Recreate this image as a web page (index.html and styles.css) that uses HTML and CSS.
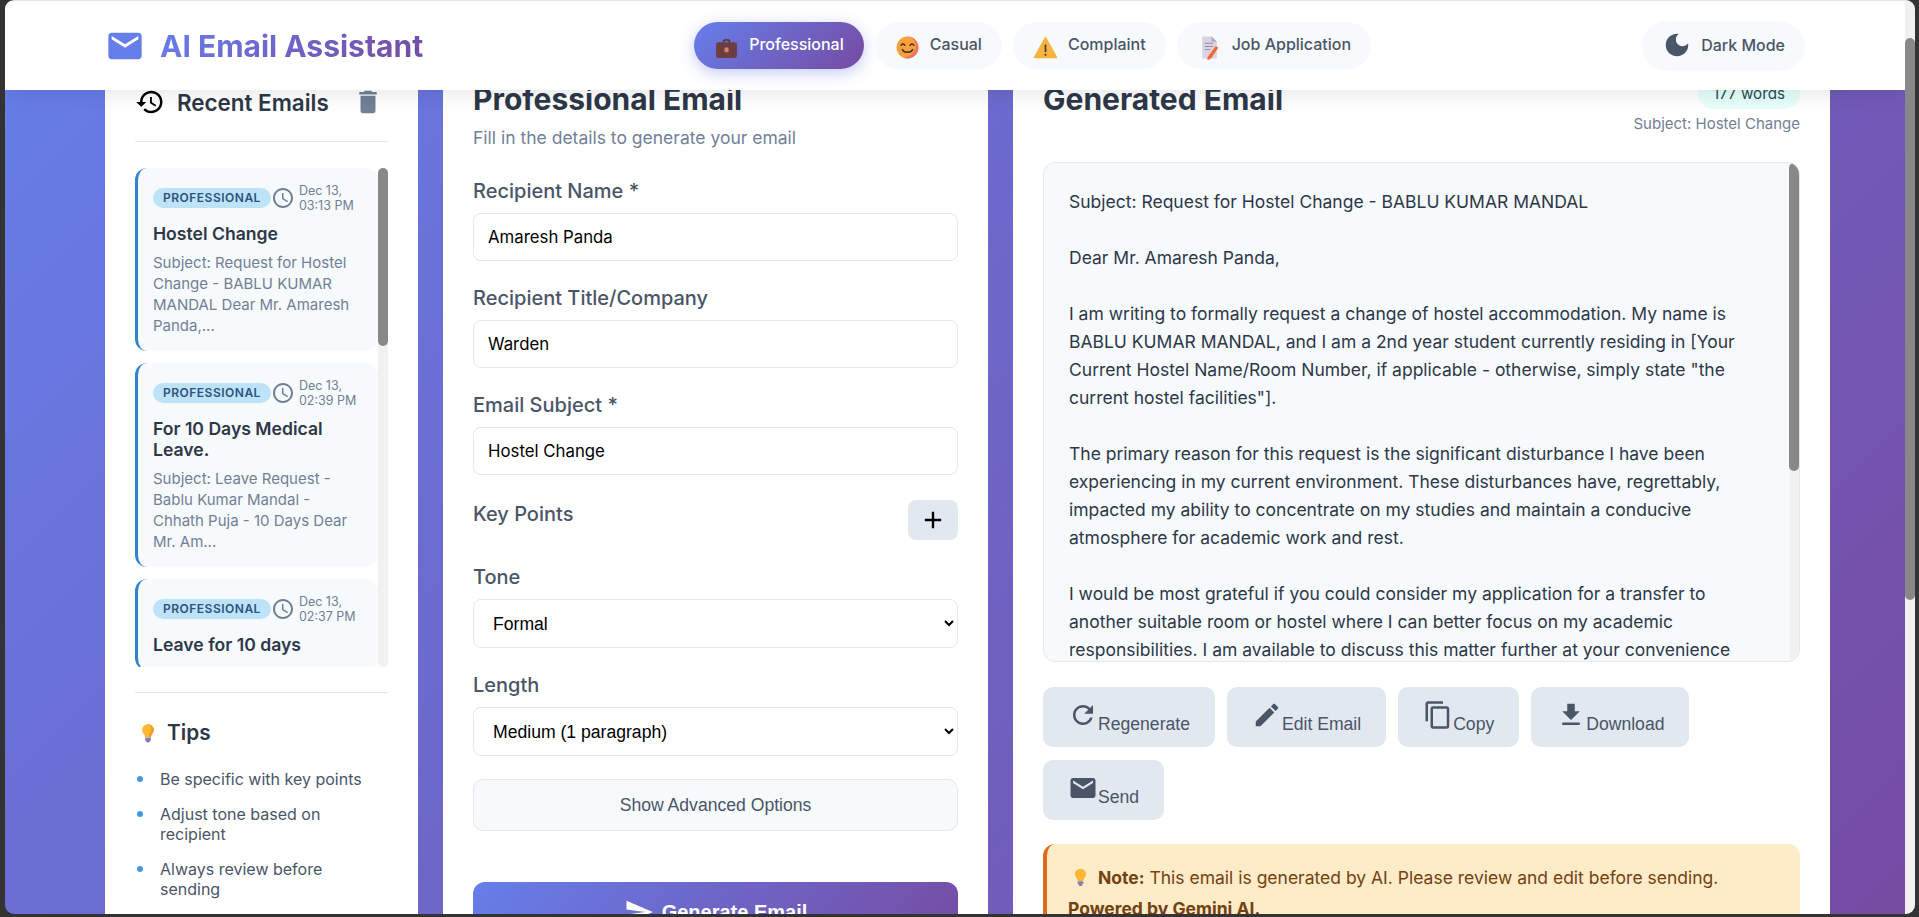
FILE: index.html
```html
<!DOCTYPE html>
<html lang="en">
<head>
	<meta charset="UTF-8">
	<title>AI Email Assistant</title>
	<link rel="stylesheet" href="styles.css">
</head>
<body>
<div class="window">
	<div class="page">
		<header class="topbar">
			<div class="brand">
				<svg class="brand-icon" viewBox="0 0 24 24"><path d="M20 4H4c-1.1 0-1.99.9-1.99 2L2 18c0 1.1.9 2 2 2h16c1.1 0 2-.9 2-2V6c0-1.1-.9-2-2-2zm0 4l-8 5-8-5V6l8 5 8-5v2z"/></svg>
				<span class="brand-name">AI Email Assistant</span>
			</div>
			<nav class="tabs">
				<a class="tab active">
					<svg class="emoji" viewBox="0 0 24 24"><path d="M8.5 7V5.5C8.5 4.7 9.2 4 10 4h4c.8 0 1.5.7 1.5 1.5V7H14V5.6h-4V7z" fill="#4d3030"/><rect x="2" y="7" width="20" height="15" rx="2" fill="#6d3d44"/><rect x="10" y="12" width="4" height="4.5" rx="1" fill="#d9825b"/></svg>
					Professional
				</a>
				<a class="tab">
					<svg class="emoji" viewBox="0 0 24 24"><circle cx="12" cy="12" r="10.5" fill="#f9a13c"/><path d="M12 1.500A10.500 10.500 0 0 1 22.500 12c0 5-4 10.500-10.500 10.500-1 0-3-.5-4-1 6 0 12-5 12-11 0-3-2-6-3-7.500z" fill="#ee7560"/><path d="M5.800 10c.8-1.800 3-1.800 3.800 0M14.400 10c.8-1.800 3-1.800 3.800 0" fill="none" stroke="#3a2a2a" stroke-width="1.300" stroke-linecap="round"/><path d="M7 14c1.500 3.500 8.500 3.500 10 0" fill="none" stroke="#3a2a2a" stroke-width="1.400" stroke-linecap="round"/></svg>
					Casual
				</a>
				<a class="tab">
					<svg class="emoji" viewBox="0 0 24 24"><path d="M12 2.500 22.500 21.500h-21z" fill="#fbb040" stroke="#fbb040" stroke-width="1.500" stroke-linejoin="round"/><rect x="11.200" y="9" width="1.600" height="7.500" rx=".8" fill="#3c3c3c"/><circle cx="12" cy="19" r="1" fill="#3c3c3c"/></svg>
					Complaint
				</a>
				<a class="tab">
					<svg class="emoji" viewBox="0 0 24 24"><path d="M5 1.500h9l5 5v16H5z" fill="#d9d3e2"/><path d="M14 1.500v5h5z" fill="#b2a7c4"/><path d="M7.500 8h8M7.500 11h8M7.500 14h5" stroke="#9a8cad" stroke-width="1"/><path d="M18 10.500l2.500 1.800L13 23l-3.200 1 .4-3z" fill="#f06a35"/></svg>
					Job Application
				</a>
			</nav>
			<a class="theme-toggle">
				<svg class="theme-icon" viewBox="0 0 24 24"><path d="M12 3c-4.970 0-9 4.030-9 9s4.030 9 9 9 9-4.030 9-9c0-.46-.04-.92-.1-1.360-.98 1.370-2.580 2.260-4.400 2.260-2.980 0-5.400-2.420-5.400-5.400 0-1.810.89-3.420 2.260-4.400-.44-.06-.9-.1-1.360-.1z"/></svg>
				Dark Mode
			</a>
		</header>

		<main class="layout">
			<aside class="card sidebar">
				<div class="recent-head">
					<svg class="history-icon" viewBox="0 0 24 24"><path d="M13 3c-4.970 0-9 4.030-9 9H1l3.890 3.890.07.14L9 12H6c0-3.870 3.130-7 7-7s7 3.130 7 7-3.130 7-7 7c-1.930 0-3.680-.79-4.940-2.060l-1.420 1.420C8.270 19.990 10.510 21 13 21c4.970 0 9-4.030 9-9s-4.030-9-9-9zm-1 5v5l4.280 2.540.72-1.210-3.500-2.080V8H12z"/></svg>
					<h3 class="recent-title">Recent Emails</h3>
					<svg class="trash-icon" viewBox="0 0 24 24"><path d="M6 19c0 1.100.9 2 2 2h8c1.100 0 2-.9 2-2V7H6v12zM19 4h-3.500l-1-1h-5l-1 1H5v2h14V4z"/></svg>
				</div>
				<div class="email-list">
					<div class="email-list-inner">
						<div class="email-item">
							<div class="item-meta">
								<span class="badge">Professional</span>
								<svg class="clock" viewBox="0 0 24 24"><path d="M11.990 2C6.470 2 2 6.480 2 12s4.470 10 9.990 10C17.520 22 22 17.520 22 12S17.520 2 11.990 2zM12 20c-4.420 0-8-3.580-8-8s3.580-8 8-8 8 3.580 8 8-3.580 8-8 8zm.5-13H11v6l5.250 3.150.75-1.230-4.500-2.670z"/></svg>
								<span class="item-date">Dec 13,<br>03:13 PM</span>
							</div>
							<div class="item-title">Hostel Change</div>
							<div class="item-preview">Subject: Request for Hostel Change - BABLU KUMAR MANDAL Dear Mr. Amaresh Panda,...</div>
						</div>
						<div class="email-item">
							<div class="item-meta">
								<span class="badge">Professional</span>
								<svg class="clock" viewBox="0 0 24 24"><path d="M11.990 2C6.470 2 2 6.480 2 12s4.470 10 9.990 10C17.520 22 22 17.520 22 12S17.520 2 11.990 2zM12 20c-4.420 0-8-3.580-8-8s3.580-8 8-8 8 3.580 8 8-3.580 8-8 8zm.5-13H11v6l5.250 3.150.75-1.230-4.500-2.670z"/></svg>
								<span class="item-date">Dec 13,<br>02:39 PM</span>
							</div>
							<div class="item-title">For 10 Days Medical Leave.</div>
							<div class="item-preview">Subject: Leave Request - Bablu Kumar Mandal - Chhath Puja - 10 Days Dear Mr. Am...</div>
						</div>
						<div class="email-item">
							<div class="item-meta">
								<span class="badge">Professional</span>
								<svg class="clock" viewBox="0 0 24 24"><path d="M11.990 2C6.470 2 2 6.480 2 12s4.470 10 9.990 10C17.520 22 22 17.520 22 12S17.520 2 11.990 2zM12 20c-4.420 0-8-3.580-8-8s3.580-8 8-8 8 3.580 8 8-3.580 8-8 8zm.5-13H11v6l5.250 3.150.75-1.230-4.500-2.670z"/></svg>
								<span class="item-date">Dec 13,<br>02:37 PM</span>
							</div>
							<div class="item-title">Leave for 10 days</div>
						</div>
					</div>
					<div class="track"><div class="thumb list-thumb"></div></div>
				</div>
				<div class="tips">
					<h3 class="tips-title">
						<svg class="emoji-small" viewBox="0 0 24 24"><path d="M12 1.500c-4 0-7 3-7 6.800 0 3 2 4.500 3 6.700.4.900.5 1.500.5 2h7c0-.5.1-1.100.5-2 1-2.200 3-3.700 3-6.700 0-3.800-3-6.800-7-6.800z" fill="#fdb833"/><path d="M12 1.500c4 0 7 3 7 6.800 0 3-2 4.500-3 6.700-.4.900-.5 1.500-.5 2H13c0-5 3-7 3-10 0-2.500-2-4.500-4-5.500z" fill="#f59b2a"/><rect x="8.500" y="17.500" width="7" height="4" rx="1" fill="#8f7fb0"/><rect x="10" y="21.500" width="4" height="1.500" rx=".7" fill="#6c5b8f"/></svg>
						Tips
					</h3>
					<ul class="tips-list">
						<li>Be specific with key points</li>
						<li>Adjust tone based on recipient</li>
						<li>Always review before sending</li>
					</ul>
				</div>
			</aside>

			<section class="card form-card">
				<h2 class="card-title">Professional Email</h2>
				<p class="card-sub">Fill in the details to generate your email</p>
				<div class="field">
					<label class="field-label">Recipient Name *</label>
					<input class="field-input" type="text" value="Amaresh Panda">
				</div>
				<div class="field">
					<label class="field-label">Recipient Title/Company</label>
					<input class="field-input" type="text" value="Warden">
				</div>
				<div class="field">
					<label class="field-label">Email Subject *</label>
					<input class="field-input" type="text" value="Hostel Change">
				</div>
				<div class="key-row">
					<label class="field-label">Key Points</label>
					<button class="add-btn"><svg class="add-icon" viewBox="0 0 24 24"><path d="M19 13h-6v6h-2v-6H5v-2h6V5h2v6h6v2z"/></svg></button>
				</div>
				<div class="field">
					<label class="field-label">Tone</label>
					<select class="field-select"><option>Formal</option></select>
				</div>
				<div class="field">
					<label class="field-label">Length</label>
					<select class="field-select"><option>Medium (1 paragraph)</option></select>
				</div>
				<button class="advanced-btn">Show Advanced Options</button>
				<button class="generate-btn">
					<svg class="generate-icon" viewBox="0 0 24 24"><path d="M2.010 21L23 12 2.010 3 2 10l15 2-15 2z"/></svg>
					Generate Email
				</button>
			</section>

			<section class="card output-card">
				<div class="output-head">
					<h2 class="card-title">Generated Email</h2>
					<div class="output-info">
						<span class="word-count">177 words</span>
						<span class="output-subject">Subject: Hostel Change</span>
					</div>
				</div>
				<div class="email-box">
					<div class="email-text">Subject: Request for Hostel Change - BABLU KUMAR MANDAL

Dear Mr. Amaresh Panda,

I am writing to formally request a change of hostel accommodation. My name is BABLU KUMAR MANDAL, and I am a 2nd year student currently residing in [Your Current Hostel Name/Room Number, if applicable - otherwise, simply state "the current hostel facilities"].

The primary reason for this request is the significant disturbance I have been experiencing in my current environment. These disturbances have, regrettably, impacted my ability to concentrate on my studies and maintain a conducive atmosphere for academic work and rest.

I would be most grateful if you could consider my application for a transfer to another suitable room or hostel where I can better focus on my academic responsibilities. I am available to discuss this matter further at your convenience</div>
					<div class="track"><div class="thumb box-thumb"></div></div>
				</div>
				<div class="actions">
					<button class="action-btn"><svg class="action-icon" viewBox="0 0 24 24"><path d="M17.650 6.350C16.200 4.900 14.210 4 12 4c-4.420 0-7.990 3.580-7.990 8s3.570 8 7.990 8c3.730 0 6.840-2.550 7.730-6h-2.080c-.82 2.330-3.040 4-5.650 4-3.310 0-6-2.690-6-6s2.690-6 6-6c1.660 0 3.140.69 4.220 1.780L13 11h7V4l-2.350 2.350z"/></svg>Regenerate</button>
					<button class="action-btn"><svg class="action-icon" viewBox="0 0 24 24"><path d="M3 17.250V21h3.750L17.810 9.940l-3.750-3.750L3 17.250zM20.710 7.040c.39-.39.39-1.020 0-1.410l-2.340-2.340c-.39-.39-1.020-.39-1.410 0l-1.830 1.830 3.750 3.750 1.830-1.830z"/></svg>Edit Email</button>
					<button class="action-btn"><svg class="action-icon" viewBox="0 0 24 24"><path d="M16 1H4c-1.100 0-2 .9-2 2v14h2V3h12V1zm3 4H8c-1.100 0-2 .9-2 2v14c0 1.100.9 2 2 2h11c1.100 0 2-.9 2-2V7c0-1.100-.9-2-2-2zm0 16H8V7h11v14z"/></svg>Copy</button>
					<button class="action-btn"><svg class="action-icon" viewBox="0 0 24 24"><path d="M19 9h-4V3H9v6H5l7 7 7-7zM5 18v2h14v-2H5z"/></svg>Download</button>
					<button class="action-btn"><svg class="action-icon" viewBox="0 0 24 24"><path d="M20 4H4c-1.100 0-1.990.9-1.990 2L2 18c0 1.100.9 2 2 2h16c1.100 0 2-.9 2-2V6c0-1.100-.9-2-2-2zm0 4l-8 5-8-5V6l8 5 8-5v2z"/></svg>Send</button>
				</div>
				<div class="note">
					<p class="note-line">
						<svg class="emoji-note" viewBox="0 0 24 24"><path d="M12 1.500c-4 0-7 3-7 6.800 0 3 2 4.500 3 6.700.4.900.5 1.500.5 2h7c0-.5.1-1.100.5-2 1-2.200 3-3.700 3-6.700 0-3.800-3-6.800-7-6.800z" fill="#fdb833"/><rect x="8.500" y="17.500" width="7" height="4" rx="1" fill="#8f7fb0"/><rect x="10" y="21.500" width="4" height="1.500" rx=".7" fill="#6c5b8f"/></svg>
						<strong>Note:</strong> This email is generated by AI. Please review and edit before sending.
					</p>
					<p class="note-line note-power"><strong>Powered by Gemini AI.</strong></p>
				</div>
			</section>
		</main>
	</div>
	<div class="page-scroll"><div class="page-thumb"></div></div>
</div>
</body>
</html>
```

FILE: styles.css
```css
*{box-sizing: border-box;}
html,body{margin: 0;height: 100%;overflow: hidden;}
body{background-color: #333;padding: 0 4px 3px 5px;font-family: Inter,"Noto Sans",sans-serif;color: #2d3748;}
h2,h3,p,ul{margin: 0;padding: 0;}
svg{fill: currentColor;}

.window{height: 914px;display: flex;border-radius: 9px;overflow: hidden;}
.page{flex: 1;min-width: 0;position: relative;overflow: hidden;border-top: 1px solid #e5e5e5;background: linear-gradient(135deg,#667eea 0%,#764ba2 100%);}
.page-scroll{width: 10px;background-color: #f1f1f1;padding-top: 38px;}
.page-thumb{height: 562px;background-color: #888;border-radius: 5px;}

/* top bar */
.topbar{position: absolute;top: 0;left: 0;right: 0;z-index: 5;height: 89px;padding: 0 100px;display: flex;align-items: center;justify-content: space-between;background-color: #fff;box-shadow: 0 4px 20px rgba(0,0,0,.1);}
.brand{display: flex;align-items: center;gap: 15px;}
.brand-icon{width: 40px;height: 40px;color: #667eea;}
.brand-name{font-size: 30px;font-weight: 700;background: linear-gradient(135deg,#667eea,#764ba2);-webkit-background-clip: text;background-clip: text;color: transparent;}
.tabs{display: flex;gap: 11px;}
.tab{height: 47px;padding: 0 20px 3px;display: flex;align-items: center;gap: 10px;border-radius: 25px;background-color: #f7fafc;color: #4a5568;font-size: 16px;font-weight: 500;}
.tab.active{background: linear-gradient(135deg,#667eea,#764ba2);color: #fff;box-shadow: 0 4px 15px rgba(102,126,234,.4);}
.emoji{width: 25px;height: 25px;margin-top: 6px;}
.theme-toggle{height: 50px;padding: 0 20px 2px;display: flex;align-items: center;gap: 9px;border-radius: 25px;background-color: #f7fafc;color: #4a5568;font-size: 16px;font-weight: 500;}
.theme-icon{width: 30px;height: 30px;}

/* columns */
.layout{display: grid;grid-template-columns: 313px 545px 1fr;gap: 25px;padding: 45px 75px 0 100px;}
.card{background-color: #fff;border-radius: 20px;padding: 30px;height: 1400px;}

/* recent emails */
.recent-head{height: 66px;padding-bottom: 13px;display: flex;align-items: center;border-bottom: 1px solid #e2e8f0;}
.history-icon{width: 30px;height: 30px;color: #000;flex-shrink: 0;}
.recent-title{flex: 1;margin-left: 12px;font-size: 22.4px;font-weight: 600;white-space: nowrap;}
.trash-icon{width: 30px;height: 30px;color: #718096;margin-right: 5px;flex-shrink: 0;}

.email-list{height: 499px;margin-top: 26px;display: flex;}
.email-list-inner{flex: 1;min-width: 0;overflow: hidden;}
.track{width: 10px;flex-shrink: 0;background-color: #f1f1f1;border-radius: 5px;}
.thumb{background-color: #888;border-radius: 5px;}
.list-thumb{height: 178px;}
.box-thumb{height: 308px;}
.email-item{background-color: #f7fafc;border-left: 3px solid #3182ce;border-radius: 12px;padding: 15px;margin-bottom: 12px;}
.item-meta{display: flex;align-items: center;height: 30px;margin-right: -8px;}
.badge{height: 20px;line-height: 20px;padding: 0 10px;border-radius: 10px;background-color: #bee3f8;color: #2c5282;font-size: 12px;font-weight: 600;letter-spacing: .5px;text-transform: uppercase;white-space: nowrap;}
.clock{width: 24px;height: 24px;color: #718096;flex-shrink: 0;}
.item-date{margin-left: 4px;font-size: 12.5px;line-height: 15px;color: #718096;white-space: nowrap;}
.item-title{margin-top: 10px;font-size: 17.6px;line-height: 21px;font-weight: 600;color: #2d3748;}
.item-preview{margin-top: 8px;font-size: 15px;line-height: 21px;color: #718096;}

/* tips */
.tips{margin-top: 25px;padding-top: 24px;border-top: 1px solid #e2e8f0;}
.tips-title{display: flex;align-items: center;gap: 9px;height: 31px;padding-left: 3px;font-size: 20.8px;font-weight: 600;}
.emoji-small{width: 20px;height: 22px;}
.tips-list{margin-top: 21px;list-style: none;display: flex;flex-direction: column;gap: 15px;}
.tips-list li{position: relative;padding: 0 10px 0 25px;font-size: 16px;line-height: 20px;color: #4a5568;}
.tips-list li::before{content: "";position: absolute;left: 2px;top: 7px;width: 6px;height: 6px;border-radius: 50%;background-color: #4299e1;}

/* form */
.card-title{font-size: 30px;line-height: 46px;font-weight: 700;color: #2d3748;}
.card-sub{margin: 3px 0 26px;font-size: 17.5px;line-height: 26px;color: #718096;}
.field{margin-bottom: 23px;}
.field-label{display: block;margin-bottom: 8px;font-size: 20px;line-height: 28px;font-weight: 500;color: #4a5568;}
.field-input{display: block;width: 100%;height: 48px;padding: 0 14px;border: 1px solid #e2e8f0;border-radius: 8px;background-color: #fff;font-family: Inter,sans-serif;font-size: 16.8px;color: #000;}
.field-select{display: block;width: 100%;height: 49px;padding: 0 15px;border: 1px solid #e2e8f0;border-radius: 8px;background-color: #fff;font-family: "Liberation Sans",Arial,sans-serif;font-size: 17.6px;color: #000;}
.key-row{display: flex;justify-content: space-between;align-items: flex-start;margin: 25px 0 23px;}
.key-row .field-label{margin-bottom: 0;}
.add-btn{width: 50px;height: 40px;padding: 0;display: flex;align-items: center;justify-content: center;border: 0;border-radius: 8px;background-color: #e2e8f0;color: #000;}
.add-icon{width: 28px;height: 28px;}
.advanced-btn{display: block;width: 100%;height: 52px;margin-top: 2px;border: 1px solid #e2e8f0;border-radius: 10px;background-color: #f7fafc;color: #4a5568;font-family: "Liberation Sans",Arial,sans-serif;font-size: 17.6px;}
.generate-btn{width: 100%;height: 60px;margin-top: 51px;display: flex;align-items: center;justify-content: center;gap: 8px;border: 0;border-radius: 12px;background: linear-gradient(135deg,#667eea,#764ba2);color: #fff;font-family: "Liberation Sans",Arial,sans-serif;font-size: 20px;font-weight: 700;}
.generate-icon{width: 30px;height: 30px;}

/* output */
.output-head{display: flex;justify-content: space-between;align-items: flex-start;margin-bottom: 27px;}
.output-info{display: flex;flex-direction: column;align-items: flex-end;}
.word-count{height: 31px;line-height: 31px;margin-top: 2px;padding: 0 15px;border-radius: 15px;background-color: #e6fffa;color: #234e52;font-size: 15.2px;}
.output-subject{margin-top: 4px;font-size: 15px;line-height: 22px;color: #718096;}
.email-box{height: 500px;display: flex;border: 1px solid #e2e8f0;border-radius: 12px;background-color: #f7fafc;overflow: hidden;}
.email-text{flex: 1;min-width: 0;padding: 25px;font-size: 17.5px;line-height: 28px;color: #2d3748;white-space: pre-wrap;overflow: hidden;}
.actions{display: flex;flex-wrap: wrap;gap: 13px 12px;margin-top: 25px;}
.action-btn{height: 60px;padding: 0 25px;border: 0;border-radius: 10px;background-color: #e2e8f0;color: #4a5568;font-family: "Liberation Sans",Arial,sans-serif;font-size: 17.6px;white-space: nowrap;}
.action-icon{width: 30px;height: 30px;}
.note{margin-top: 24px;padding: 20px 21px;border-left: 4px solid #dd6b20;border-radius: 12px;background-color: #feebc8;color: #744210;font-size: 17.5px;line-height: 28px;}
.note-power{margin-top: 3px;}
.emoji-note{width: 19px;height: 20px;vertical-align: -3px;margin: 0 3px;}
```
